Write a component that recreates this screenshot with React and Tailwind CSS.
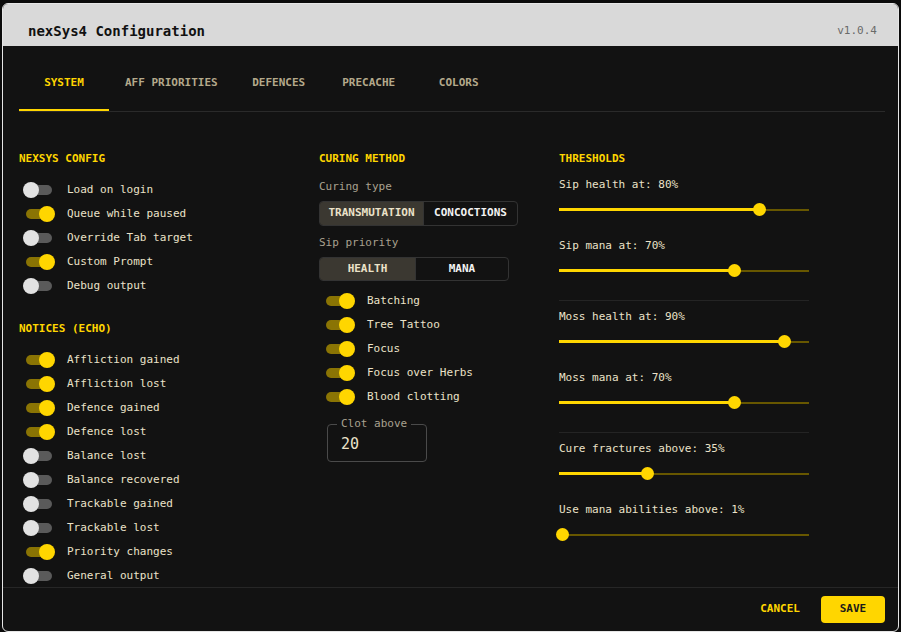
import { useState } from "react";

const tabs = ["SYSTEM", "AFF PRIORITIES", "DEFENCES", "PRECACHE", "COLORS"];

const configToggles = [
  ["Load on login", false],
  ["Queue while paused", true],
  ["Override Tab target", false],
  ["Custom Prompt", true],
  ["Debug output", false],
];

const noticeToggles = [
  ["Affliction gained", true],
  ["Affliction lost", true],
  ["Defence gained", true],
  ["Defence lost", true],
  ["Balance lost", false],
  ["Balance recovered", false],
  ["Trackable gained", false],
  ["Trackable lost", false],
  ["Priority changes", true],
  ["General output", false],
];

const curingToggles = ["Batching", "Tree Tattoo", "Focus", "Focus over Herbs", "Blood clotting"];

const thresholdGroups = [
  [["Sip health at", 80], ["Sip mana at", 70]],
  [["Moss health at", 90], ["Moss mana at", 70]],
  [["Cure fractures above", 35], ["Use mana abilities above", 1]],
];

function Toggle({ label, on }) {
  return (
    <div className="flex items-center h-[24px]">
      <div className="relative w-[36px] h-[16px] ml-[4px] mr-[8px] shrink-0">
        <div
          className={`absolute left-[3px] top-[3px] w-[26px] h-[10px] rounded-full ${
            on ? "bg-[#8a7404]" : "bg-[#5a5a5a]"
          }`}
        />
        <div
          className={`absolute top-0 w-[16px] h-[16px] rounded-full ${
            on ? "left-[16px] bg-[#ffd600]" : "left-0 bg-[#e2e2e2]"
          }`}
        />
      </div>
      <span className="text-[11px] leading-[16px] text-[#ebe2c9]">{label}</span>
    </div>
  );
}

function Heading({ children }) {
  return <div className="text-[11px] leading-[16px] font-bold text-[#ffd600]">{children}</div>;
}

function Slider({ label, value }) {
  return (
    <div>
      <div className="text-[11px] leading-[16px] text-[#ebe2c9]">
        {label}: {value}%
      </div>
      <div className="relative w-[250px] h-[20px] mt-[7px]">
        <div className="absolute left-0 right-0 top-[9px] h-[2px] bg-[#675700]" />
        <div className="absolute left-0 top-[8px] h-[3px] bg-[#ffd600]" style={{ width: `${value}%` }} />
        <div
          className="absolute top-[3px] w-[13px] h-[13px] -ml-[6px] rounded-full bg-[#ffd600]"
          style={{ left: `${Math.max(value, 1.2)}%` }}
        />
      </div>
    </div>
  );
}

export default function App() {
  const [tab, setTab] = useState(0);

  return (
    <div className="w-[901px] h-[632px] bg-[#0b0b0b] pt-[3px] px-[2px] overflow-hidden font-['DejaVu_Sans_Mono',monospace]">
      <div className="h-[629px] rounded-[6px] border border-[#e6e6e6] bg-[#121212] overflow-hidden flex flex-col">
        {/* HEADER */}
        <div className="h-[42px] shrink-0 bg-[#d9d9d9] flex items-start justify-between pl-[25px] pr-[21px] pt-[17px]">
          <span className="text-[14px] leading-[20px] font-bold text-[#111]">nexSys4 Configuration</span>
          <span className="text-[11px] leading-[20px] text-[#6a6a6a]">v1.0.4</span>
        </div>

        {/* TABS */}
        <div className="ml-[16px] mr-[13px] flex border-b border-[#2a2a2a] shrink-0">
          {tabs.map((t, i) => (
            <div
              key={t}
              onClick={() => setTab(i)}
              className={`relative min-w-[90px] px-4 h-[65px] pt-[30px] text-[11px] leading-[14px] font-bold flex justify-center cursor-pointer ${
                i === tab ? "text-[#ffd600]" : "text-[#b4a98b]"
              }`}
            >
              {t}
              {i === tab && <div className="absolute left-0 right-0 bottom-0 h-[2px] bg-[#ffd600]" />}
            </div>
          ))}
        </div>

        {/* CONTENT */}
        <div className="flex-1 min-h-0 overflow-hidden pl-[16px] pr-[13px] pt-[39px] grid grid-cols-[300px_240px_1fr]">
          <div>
            <Heading>NEXSYS CONFIG</Heading>
            <div className="mt-[11px]">
              {configToggles.map(([l, on]) => (
                <Toggle key={l} label={l} on={on} />
              ))}
            </div>
            <div className="mt-[23px]">
              <Heading>NOTICES (ECHO)</Heading>
            </div>
            <div className="mt-[11px]">
              {noticeToggles.map(([l, on]) => (
                <Toggle key={l} label={l} on={on} />
              ))}
            </div>
          </div>

          <div>
            <Heading>CURING METHOD</Heading>
            <div className="mt-[12px] text-[11px] leading-[16px] text-[#a9a18f]">Curing type</div>
            <div className="mt-[6px] flex w-fit h-[25px] border border-[#333] rounded-[4px] overflow-hidden text-[11px] font-bold">
              <div className="w-[103px] flex items-center justify-center bg-[#3b3831] text-[#ebe2c9]">TRANSMUTATION</div>
              <div className="w-[94px] flex items-center justify-center border-l border-[#333] text-[#f2f2f2]">CONCOCTIONS</div>
            </div>
            <div className="mt-[9px] text-[11px] leading-[16px] text-[#a9a18f]">Sip priority</div>
            <div className="mt-[6px] flex w-fit h-[24px] border border-[#333] rounded-[4px] overflow-hidden text-[11px] font-bold">
              <div className="w-[95px] flex items-center justify-center bg-[#3b3831] text-[#ebe2c9]">HEALTH</div>
              <div className="w-[93px] flex items-center justify-center border-l border-[#333] text-[#f2f2f2]">MANA</div>
            </div>
            <div className="mt-[8px]">
              {curingToggles.map((l) => (
                <Toggle key={l} label={l} on />
              ))}
            </div>
            <div className="relative mt-[15px] ml-[8px] w-[100px] h-[38px] border border-[#4a4a4a] rounded-[4px] flex items-center pl-[13px] pt-[2px]">
              <span className="absolute -top-[8px] left-[9px] px-[4px] bg-[#121212] text-[11px] leading-[14px] text-[#a9a18f]">
                Clot above
              </span>
              <span className="text-[15px] text-[#ebe2c9]">20</span>
            </div>
          </div>

          <div>
            <Heading>THRESHOLDS</Heading>
            <div className="mt-[10px]">
              {thresholdGroups.map((g, gi) => (
                <div
                  key={gi}
                  className={`w-[250px] flex flex-col gap-[18px] ${
                    gi < thresholdGroups.length - 1 ? "pb-[19px] mb-[8px] border-b border-[#242424]" : ""
                  }`}
                >
                  {g.map(([l, v]) => (
                    <Slider key={l} label={l} value={v} />
                  ))}
                </div>
              ))}
            </div>
          </div>
        </div>

        {/* FOOTER */}
        <div className="h-[44px] shrink-0 border-t border-[#262626] flex items-start justify-end gap-[13px] pt-[8px] pr-[13px]">
          <button className="h-[27px] px-[8px] text-[11px] font-bold text-[#ffd600]">CANCEL</button>
          <button className="h-[27px] w-[64px] rounded-[4px] bg-[#ffd600] text-[11px] font-bold text-[#1a1a1a]">SAVE</button>
        </div>
      </div>
    </div>
  );
}
